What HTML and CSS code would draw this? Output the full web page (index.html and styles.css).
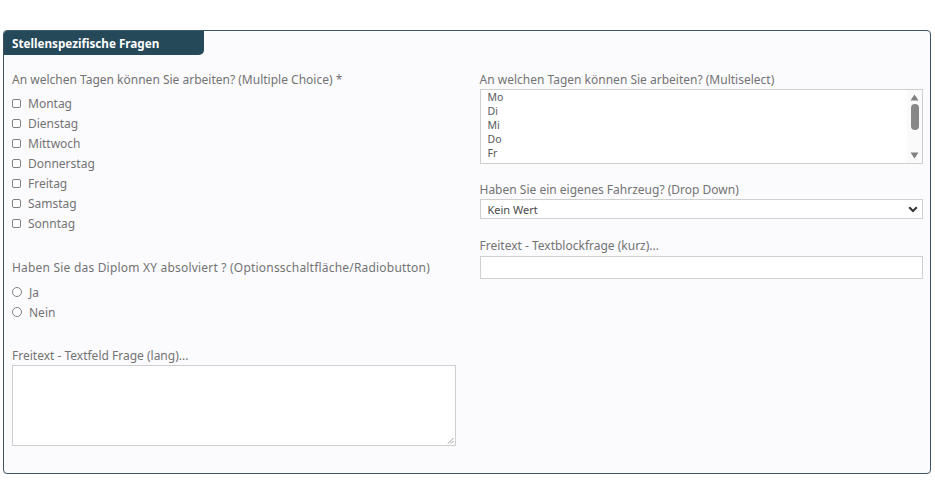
FILE: index.html
```html
<!DOCTYPE html>
<html lang="de">
<head>
<meta charset="utf-8">
<title>Stellenspezifische Fragen</title>
<link rel="stylesheet" href="styles.css">
</head>
<body>
<section class="panel">
  <div class="panel-head">Stellenspezifische Fragen</div>
  <div class="grid">
    <div class="col">
      <div class="field">
        <div class="label">An welchen Tagen können Sie arbeiten? (Multiple Choice) *</div>
        <div class="options">
          <label class="opt"><span class="cb"></span>Montag</label>
          <label class="opt"><span class="cb"></span>Dienstag</label>
          <label class="opt"><span class="cb"></span>Mittwoch</label>
          <label class="opt"><span class="cb"></span>Donnerstag</label>
          <label class="opt"><span class="cb"></span>Freitag</label>
          <label class="opt"><span class="cb"></span>Samstag</label>
          <label class="opt"><span class="cb"></span>Sonntag</label>
        </div>
      </div>
      <div class="field radios">
        <div class="label">Haben Sie das Diplom XY absolviert ? (Optionsschaltfläche/Radiobutton)</div>
        <div class="options">
          <label class="opt"><span class="rb"></span>Ja</label>
          <label class="opt"><span class="rb"></span>Nein</label>
        </div>
      </div>
      <div class="field long">
        <div class="label">Freitext - Textfeld Frage (lang)...</div>
        <div class="textarea">
          <svg class="grip" width="7" height="7" viewBox="0 0 7 7"><path d="M6.5 1 L1 6.5 M6.5 4 L4 6.5" stroke="#9a9a9a" stroke-width="1" fill="none"/></svg>
        </div>
      </div>
    </div>
    <div class="col">
      <div class="field">
        <div class="label">An welchen Tagen können Sie arbeiten? (Multiselect)</div>
        <div class="multi">
          <div class="items">
            <div>Mo</div><div>Di</div><div>Mi</div><div>Do</div><div>Fr</div><div>Sa</div>
          </div>
          <div class="sbar">
            <svg width="9" height="7" viewBox="0 0 9 7"><path d="M4.5 0.5 L8.5 6.5 L0.5 6.5 Z" fill="#808080"/></svg>
            <span class="thumb"></span>
            <span class="spacer"></span>
            <svg width="9" height="7" viewBox="0 0 9 7"><path d="M0.5 0.5 L8.5 0.5 L4.5 6.5 Z" fill="#808080"/></svg>
          </div>
        </div>
      </div>
      <div class="field drop">
        <div class="label">Haben Sie ein eigenes Fahrzeug? (Drop Down)</div>
        <div class="select">
          <span>Kein Wert</span>
          <svg width="10" height="7" viewBox="0 0 10 7"><path d="M1.2 1.3 L5 5 L8.8 1.3" stroke="#333" stroke-width="2" fill="none"/></svg>
        </div>
      </div>
      <div class="field short">
        <div class="label">Freitext - Textblockfrage (kurz)...</div>
        <div class="input"></div>
      </div>
    </div>
  </div>
</section>
</body>
</html>
```
FILE: styles.css
```css
* { box-sizing: border-box; }
html, body { margin: 0; padding: 0; background: #ffffff; }
body {
  font-family: "Noto Sans", "Open Sans", sans-serif;
  color: #737373;
  font-size: 12px;
}
.panel {
  margin: 30px 4px 0 3px;
  height: 444px;
  border: 1px solid #3e5567;
  border-radius: 4px;
  background: #fbfbfe;
}
.panel-head {
  width: 200px;
  height: 24px;
  background: #26495a;
  color: #ffffff;
  font-weight: 700;
  font-size: 11.7px;
  line-height: 24px;
  padding-left: 8px;
  border-top-left-radius: 3px;
  border-bottom-right-radius: 5px;
}
.grid {
  display: grid;
  grid-template-columns: 1fr 1fr;
  column-gap: 24px;
  padding: 17px 7px 0 8px;
}
.col { display: flex; flex-direction: column; }
.label {
  height: 16px;
  line-height: 16px;
  font-size: 12px;
  color: #737373;
  white-space: nowrap;
}
.radios .label { letter-spacing: 0.2px; }
.options { display: flex; flex-direction: column; margin-top: 5px; }
.opt {
  height: 20px;
  display: flex;
  align-items: center;
  gap: 7px;
  font-size: 12px;
  color: #737373;
}
.cb {
  width: 9px; height: 9px;
  border: 1px solid #808080;
  border-radius: 2px;
  background: #fff;
}
.rb {
  width: 10px; height: 10px;
  border: 1px solid #808080;
  border-radius: 50%;
  background: #fff;
}
.radios { margin-top: 27px; }
.radios .options { margin-top: 6px; }
.long { margin-top: 27px; }
.long .label { height: 14px; line-height: 14px; }
.textarea {
  position: relative;
  margin-top: 2px;
  height: 81px;
  border: 1px solid #cfcfcf;
  background: #fff;
}
.grip { position: absolute; right: 1px; bottom: 1px; }
.multi {
  margin-top: 1px;
  height: 75px;
  border: 1px solid #cfcfcf;
  background: #fff;
  display: flex;
  overflow: hidden;
}
.items {
  flex: 1;
  padding: 0 0 0 7px;
  font-size: 10.5px;
  line-height: 14px;
  color: #5a5a5a;
}
.sbar {
  width: 15px;
  display: flex;
  flex-direction: column;
  align-items: center;
  padding: 4px 0 4px;
  background: #fafafa;
}
.thumb {
  width: 8px;
  height: 26px;
  border-radius: 4px;
  background: #888;
  margin-top: 3px;
}
.spacer { flex: 1; }
.drop { margin-top: 17px; }
.drop .label { height: 18px; line-height: 18px; }
.select {
  margin-top: 0;
  height: 20px;
  border: 1px solid #cfcfcf;
  background: #fff;
  display: flex;
  align-items: center;
  justify-content: space-between;
  padding: 0 4px 0 7px;
  font-size: 11px;
  color: #4a4a4a;
}
.short { margin-top: 18px; }
.short .label { height: 18px; line-height: 18px; }
.input {
  margin-top: 1px;
  height: 23px;
  border: 1px solid #cfcfcf;
  background: #fff;
}
```
